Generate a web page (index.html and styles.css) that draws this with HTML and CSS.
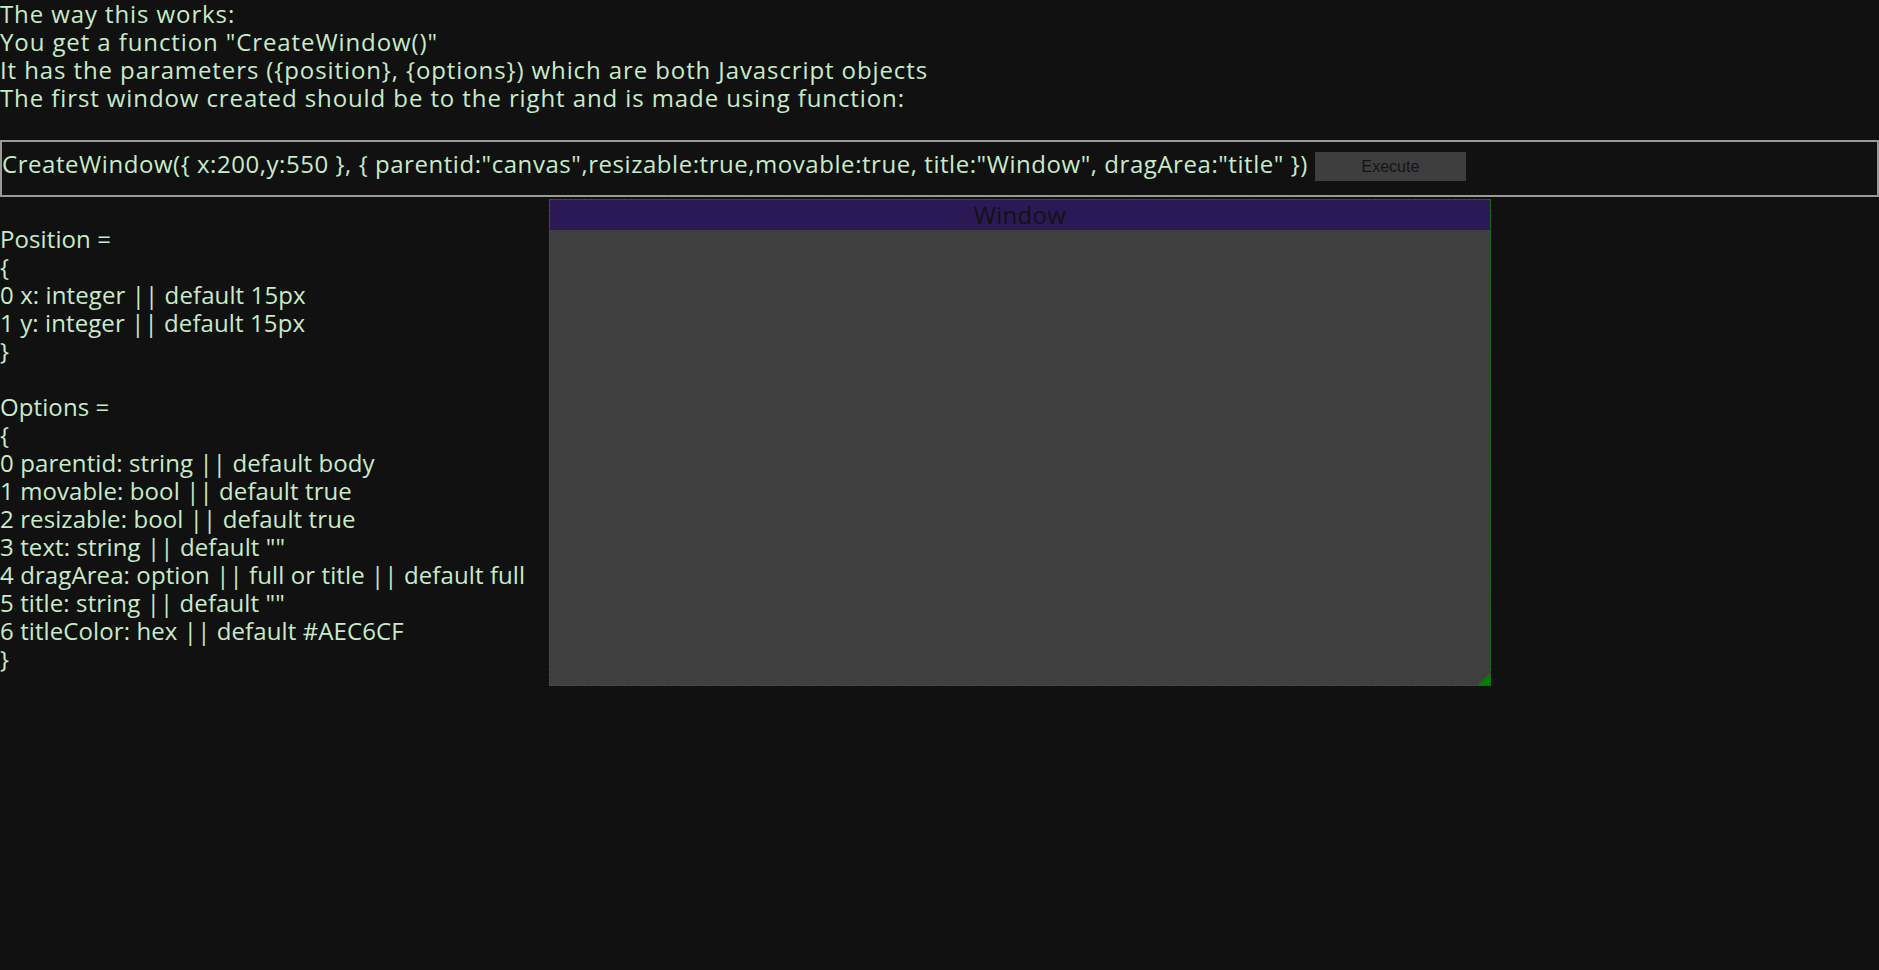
FILE: index.html
```html
<!DOCTYPE html>
<html>
<head>
<meta charset="utf-8">
<title>CreateWindow</title>
<link rel="stylesheet" href="styles.css">
</head>
<body>
<div class="intro">The way this works:<br>You get a function "CreateWindow()"<br>It has the parameters ({position}, {options}) which are both Javascript objects<br>The first window created should be to the right and is made using function:<br><br></div>
<div class="cmdbar"><span class="cmd">CreateWindow({ x:200,y:550 }, { parentid:"canvas",resizable:true,movable:true, title:"Window", dragArea:"title" })</span><button class="exec">Execute</button></div>
<div class="docs"><br>Position =<br>{<br>0 x: integer || default 15px<br>1 y: integer || default 15px<br>}<br><br>Options =<br>{<br>0 parentid: string || default body<br>1 movable: bool || default true<br>2 resizable: bool || default true<br>3 text: string || default ""<br>4 dragArea: option || full or title || default full<br>5 title: string || default ""<br>6 titleColor: hex || default #AEC6CF<br>}</div>
<div class="window">
  <div class="titlebar">Window</div>
  <div class="wbody"></div>
  <div class="grip"></div>
</div>
</body>
</html>
```
FILE: styles.css
```css
html, body {
  margin: 0;
  padding: 0;
  background: #111111;
}
body {
  position: relative;
  color: #c8ebc8;
  font-family: "Open Sans", "DejaVu Sans", sans-serif;
  font-size: 24px;
  line-height: 28px;
  min-height: 970px;
}
.intro {
  letter-spacing: 0.9px;
}
.docs {
  letter-spacing: 0.1px;
}
.cmd {
  letter-spacing: 0.55px;
  white-space: nowrap;
}
.cmdbar {
  display: flex;
  align-items: flex-start;
  height: 57px;
  box-sizing: border-box;
  border: 2px solid #999999;
  padding-top: 8px;
}
.exec {
  margin: 2px 0 0 7px;
  width: 151px;
  height: 29px;
  border: none;
  background: #3e3e3e;
  color: #141414;
  font-family: "Liberation Sans", Arial, sans-serif;
  font-size: 16px;
  letter-spacing: 0;
  padding: 0;
}
.window {
  position: absolute;
  left: 549px;
  top: 199px;
  width: 942px;
  height: 487px;
  box-sizing: border-box;
  border: 1px dashed #008000;
  display: flex;
  flex-direction: column;
  background: #3f3f3f;
}
.titlebar {
  height: 30px;
  line-height: 30px;
  background: #2b1956;
  color: #121212;
  text-align: center;
  font-size: 24px;
  letter-spacing: 0.3px;
}
.wbody {
  flex: 1;
  background: #3f3f3f;
}
.grip {
  position: absolute;
  right: 0;
  bottom: 0;
  width: 12px;
  height: 12px;
  background: linear-gradient(to bottom right, transparent 50%, #008000 50%);
}
```
